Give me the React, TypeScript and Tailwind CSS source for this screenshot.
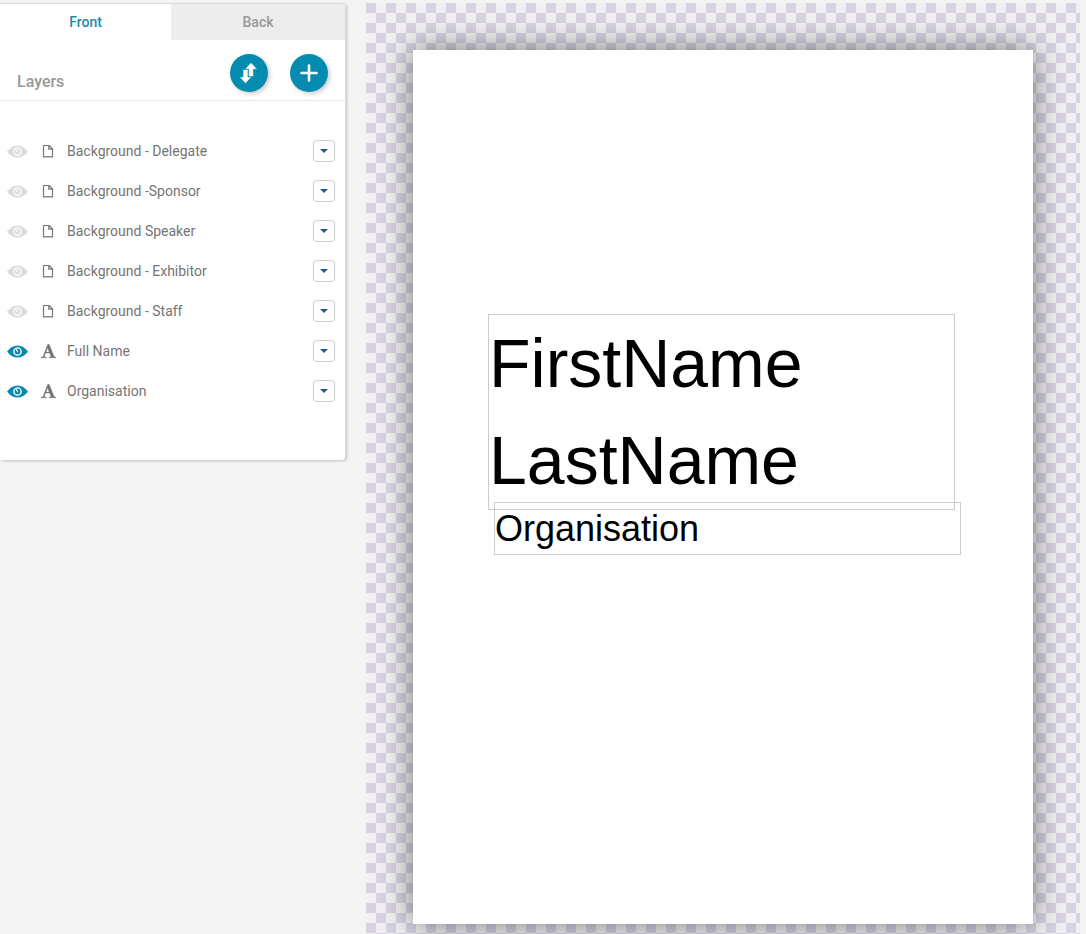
import { useState } from "react";

type Layer = {
  name: string;
  kind: "background" | "text";
  visible: boolean;
};

const initialLayers: Layer[] = [
  { name: "Background - Delegate", kind: "background", visible: false },
  { name: "Background -Sponsor", kind: "background", visible: false },
  { name: "Background Speaker", kind: "background", visible: false },
  { name: "Background - Exhibitor", kind: "background", visible: false },
  { name: "Background - Staff", kind: "background", visible: false },
  { name: "Full Name", kind: "text", visible: true },
  { name: "Organisation", kind: "text", visible: true },
];

function EyeIcon() {
  return (
    <svg viewBox="0 0 21 13" width="21" height="13" aria-hidden="true">
      <path
        fill="currentColor"
        fillRule="evenodd"
        d="M0 6.5C3 2.500 6.400.500 10.500.500S18 2.500 21 6.500C18 10.500 14.600 12.500 10.500 12.500S3 10.500 0 6.500ZM10.500 2.200a4.300 4.300 0 1 0 0 8.600a4.300 4.300 0 1 0 0-8.600Z"
      />
      <circle cx="10.500" cy="6.500" r="2.900" fill="currentColor" />
      <path
        fill="none"
        stroke="white"
        strokeWidth="1.200"
        strokeLinecap="round"
        d="M9.400 4.600L10.600 6.600"
      />
    </svg>
  );
}

function FileIcon() {
  return (
    <svg viewBox="0 0 12 14" width="12" height="14" aria-hidden="true">
      <path
        fill="none"
        stroke="currentColor"
        strokeWidth="1.200"
        strokeLinejoin="round"
        d="M1.500 1.500H7L10.500 5V12.800H1.500ZM6.800 1.500V5.200H10.500"
      />
    </svg>
  );
}

function FontIcon() {
  return (
    <svg viewBox="0 0 1664 1792" width="15" height="16" aria-hidden="true">
      <path
        fill="currentColor"
        stroke="currentColor"
        strokeWidth="40"
        d="M725 559l-170 450q33 0 136.5 2t160.5 2q19 0 57-2-87-253-184-452zM0 1664l2-79q23-7 56-12.5t57-10.5 49.5-14.5 44.5-29 31-50.5l237-616 280-724h128q8 14 11 21l205 480q33 78 106 257.5t114 274.5q15 34 58 144.5t72 168.5q20 45 35 57 19 15 88 29.5t84 20.5q6 38 6 57 0 5-.5 13.5t-.5 12.5q-63 0-190-8t-191-8q-76 0-215 7t-178 8q0-43 4-78l131-28q1 0 12.5-2.5t15.5-3.5 14.5-4.5 15-6.5 11-8 9-11 2.5-14q0-16-31-96.5t-72-177.5-42-100l-450-2q-26 58-76.5 195.5t-50.5 162.5q0 22 14 37.5t43.5 24.5 48.5 13.5 57 8.5 41 4q1 19 1 58 0 9-2 27-58 0-174.5-10t-174.5-10q-8 0-26.5 4t-21.5 4q-80 14-188 14z"
      />
    </svg>
  );
}

function SwapIcon() {
  return (
    <svg viewBox="0 0 20 22" width="20" height="22" aria-hidden="true">
      <path
        fill="currentColor"
        stroke="#058bb0"
        strokeWidth="0.600"
        d="M4 7.500H9V15H12.500L6.500 21.500L0.500 15H4Z"
      />
      <path
        fill="currentColor"
        stroke="#058bb0"
        strokeWidth="0.600"
        d="M12 0.500L18.300 7.200H14.500V14.500H9.600V7.200H5.800Z"
      />
    </svg>
  );
}

function PlusIcon() {
  return (
    <svg viewBox="0 0 20 20" width="20" height="20" aria-hidden="true">
      <path
        stroke="currentColor"
        strokeWidth="2.600"
        strokeLinecap="round"
        d="M10 2.500V17.500M2.500 10H17.500"
      />
    </svg>
  );
}

export default function App() {
  const [side, setSide] = useState("front");
  const [layers, setLayers] = useState(initialLayers);

  const toggleLayer = (name: string) => {
    setLayers(layers.map((l) => (l.name === name ? { ...l, visible: !l.visible } : l)));
  };

  return (
    <div className="flex min-h-screen items-stretch gap-5 bg-[#f4f4f4] pt-[3px] pr-1.5 font-['Roboto',sans-serif] text-sm text-[#757575]">
      <aside className="w-[346px] shrink-0 self-start rounded-r-sm border-t border-r border-[#dcdcdc] bg-white pb-[49px] shadow-[1px_1px_3px_rgba(0,0,0,0.2)]">
        <nav className="flex h-9 font-medium">
          <button
            onClick={() => setSide("front")}
            className={side === "front" ? "w-[171px] text-[#1a8aa8]" : "w-[171px] bg-[#ededed] text-[#999]"}
          >
            Front
          </button>
          <button
            onClick={() => setSide("back")}
            className={side === "back" ? "flex-1 text-[#1a8aa8]" : "flex-1 bg-[#ededed] text-[#999]"}
          >
            Back
          </button>
        </nav>
        <header className="flex h-[61px] items-start border-b border-[#e8e8e8] px-[17px] pt-3.5">
          <h2 className="mt-4 flex-1 text-base font-medium text-[#999]">Layers</h2>
          <div className="flex gap-[22px] text-white">
            <button
              aria-label="Reorder layers"
              className="flex size-[38px] items-center justify-center rounded-full bg-[#058bb0] shadow-[2px_2px_4px_rgba(0,0,0,0.2)]"
            >
              <SwapIcon />
            </button>
            <button
              aria-label="Add layer"
              className="flex size-[38px] items-center justify-center rounded-full bg-[#058bb0] shadow-[2px_2px_4px_rgba(0,0,0,0.2)]"
            >
              <PlusIcon />
            </button>
          </div>
        </header>
        <ul className="pt-[30px]">
          {layers.map((layer) => (
            <li key={layer.name} className="flex h-10 items-center pr-2.5 pl-[7px]">
              <button
                aria-label={"Toggle " + layer.name}
                onClick={() => toggleLayer(layer.name)}
                className={layer.visible ? "text-[#058bb0]" : "text-[#dcdcdc]"}
              >
                <EyeIcon />
              </button>
              <span className="ml-2.5 flex w-5 justify-center">
                {layer.kind === "text" ? <FontIcon /> : <FileIcon />}
              </span>
              <span className="ml-[9px] flex-1">{layer.name}</span>
              <button
                aria-label={"Options for " + layer.name}
                className="flex size-[22px] items-center justify-center rounded-sm border border-[#ccc] text-[#1c5a9c]"
              >
                <svg viewBox="0 0 8 4" width="8" height="4" aria-hidden="true">
                  <path fill="currentColor" d="M0 0H8L4 4Z" />
                </svg>
              </button>
            </li>
          ))}
        </ul>
      </aside>

      <main className="flex-1 bg-[#f1f1f1] bg-[conic-gradient(#0000_25%,#d8d2e2_0_50%,#0000_0_75%,#d8d2e2_0)] bg-[size:20px_20px] px-[47px] pt-[47px] pb-2.5">
        <div className="relative h-[874px] bg-white font-['Liberation_Sans',Arial,sans-serif] text-black shadow-[0_0_30px_rgba(0,0,0,0.5)]">
          <div className="absolute top-[264px] left-[75px] w-[467px] border border-[#ccc] text-[68px] leading-[97px]">
            <p>FirstName</p>
            <p>LastName</p>
          </div>
          <div className="absolute top-[452px] left-[81px] w-[467px] border border-[#ccc] text-[36px] leading-[51px]">
            Organisation
          </div>
        </div>
      </main>
    </div>
  );
}
